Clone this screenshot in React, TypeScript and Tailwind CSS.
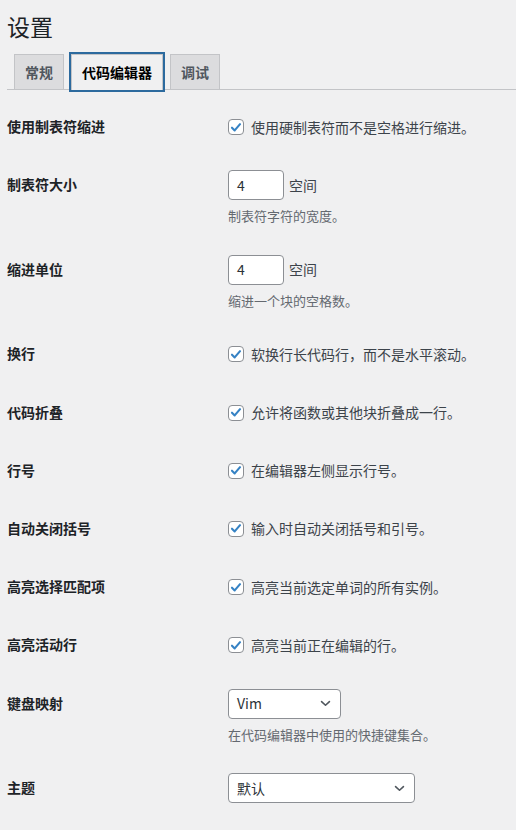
import React from "react";

const font = '"Noto Sans CJK SC", "Liberation Sans", sans-serif';

type Row =
  | { kind: "check"; label: string; text: string }
  | { kind: "number"; label: string; value: string; unit: string; desc: string }
  | { kind: "select"; label: string; value: string; width: string; desc?: string };

const rows: Row[] = [
  { kind: "check", label: "使用制表符缩进", text: "使用硬制表符而不是空格进行缩进。" },
  { kind: "number", label: "制表符大小", value: "4", unit: "空间", desc: "制表符字符的宽度。" },
  { kind: "number", label: "缩进单位", value: "4", unit: "空间", desc: "缩进一个块的空格数。" },
  { kind: "check", label: "换行", text: "软换行长代码行，而不是水平滚动。" },
  { kind: "check", label: "代码折叠", text: "允许将函数或其他块折叠成一行。" },
  { kind: "check", label: "行号", text: "在编辑器左侧显示行号。" },
  { kind: "check", label: "自动关闭括号", text: "输入时自动关闭括号和引号。" },
  { kind: "check", label: "高亮选择匹配项", text: "高亮当前选定单词的所有实例。" },
  { kind: "check", label: "高亮活动行", text: "高亮当前正在编辑的行。" },
  { kind: "select", label: "键盘映射", value: "Vim", width: "w-[113px]", desc: "在代码编辑器中使用的快捷键集合。" },
  { kind: "select", label: "主题", value: "默认", width: "w-[187px]" },
];

function Checkbox() {
  return (
    <span className="flex h-4 w-4 shrink-0 items-center justify-center rounded-[4px] border border-[#8c8f94] bg-white">
      <svg viewBox="0 0 16 16" className="h-[15px] w-[15px]" fill="none">
        <path d="M3.4 8.2 6.5 11.3 12.6 4.2" stroke="#3582c4" strokeWidth="2.4" strokeLinecap="round" strokeLinejoin="round" />
      </svg>
    </span>
  );
}

function Chevron() {
  return (
    <svg viewBox="0 0 12 8" className="h-[7px] w-[11px]" fill="none">
      <path d="M1.5 1.8 6 6 10.5 1.8" stroke="#50575e" strokeWidth="1.8" strokeLinecap="round" strokeLinejoin="round" />
    </svg>
  );
}

function Control({ row }: { row: Row }) {
  if (row.kind === "check") {
    return (
      <div className="mt-5 flex h-5 items-center gap-[7px] text-[14px] text-[#3c434a]">
        <Checkbox />
        <span>{row.text}</span>
      </div>
    );
  }
  if (row.kind === "number") {
    return (
      <div className="pt-[15px]">
        <div className="flex items-center gap-[5px] text-[14px] text-[#3c434a]">
          <div className="flex h-[30px] w-[56px] items-center rounded-[4px] border border-[#8c8f94] bg-white px-2 text-[#2c3338]">
            {row.value}
          </div>
          <span>{row.unit}</span>
        </div>
        <p className="mt-[5px] text-[13px] leading-[21px] text-[#646970]">{row.desc}</p>
      </div>
    );
  }
  return (
    <div className="pt-[15px]">
      <div
        className={`flex h-[30px] ${row.width} items-center justify-between rounded-[4px] border border-[#8c8f94] bg-white pl-2 pr-[9px] text-[14px] text-[#2c3338]`}
      >
        <span>{row.value}</span>
        <Chevron />
      </div>
      {row.desc && <p className="mt-[5px] text-[13px] leading-[21px] text-[#646970]">{row.desc}</p>}
    </div>
  );
}

export default function App() {
  const tabs = ["常规", "代码编辑器", "调试"];
  return (
    <div className="min-h-[830px] w-full overflow-hidden bg-[#f0f0f1] pl-[7px]" style={{ fontFamily: font }}>
      <h1 className="h-[54px] pt-[11px] text-[23px] leading-[30px] font-normal text-[#1d2327]">设置</h1>

      <div className="flex h-[36px] items-end gap-[7px] border-b border-[#c3c4c7] pl-[7px]">
        {tabs.map((t, i) =>
          i === 1 ? (
            <div
              key={t}
              className="-mb-px flex h-[36px] items-center border border-b-0 border-[#c3c4c7] bg-[#f0f0f1] px-[10px] text-[14px] font-semibold text-black ring-2 ring-[#2c6a9e]"
            >
              {t}
            </div>
          ) : (
            <div
              key={t}
              className="flex h-[35px] items-center border border-b-0 border-[#c3c4c7] bg-[#dcdcde] px-[10px] text-[14px] font-semibold text-[#50575e]"
            >
              {t}
            </div>
          )
        )}
      </div>

      <div className="mt-[7px]">
        {rows.map((row) => (
          <div key={row.label} className={`flex ${row.kind === "check" ? "h-[58.2px]" : "h-[84.6px]"}`}>
            <div className="w-[221px] shrink-0 pt-[20px] text-[14px] leading-[18.2px] font-semibold text-[#1d2327]">
              {row.label}
            </div>
            <div className="flex-1">
              <Control row={row} />
            </div>
          </div>
        ))}
      </div>
    </div>
  );
}
